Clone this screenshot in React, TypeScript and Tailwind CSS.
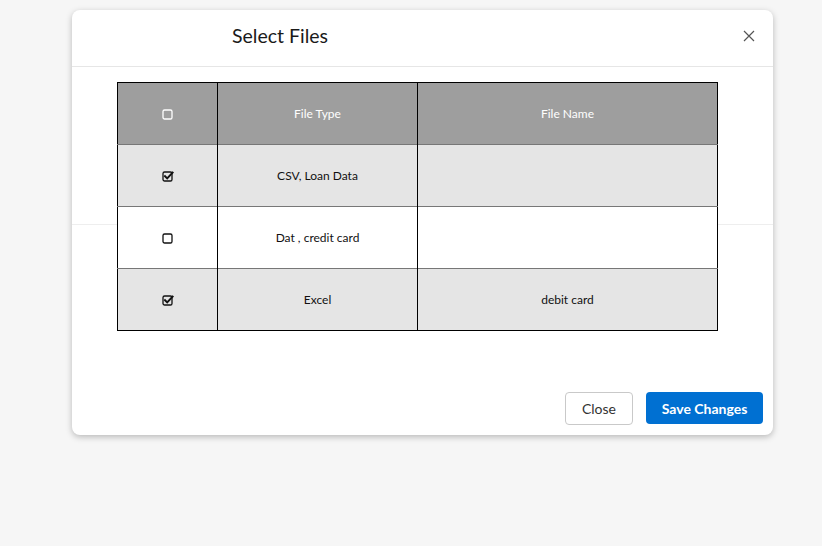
import React from 'react';

const rows = [
  { checked: true, type: 'CSV, Loan Data', name: '', shaded: true },
  { checked: false, type: 'Dat , credit card', name: '', shaded: false },
  { checked: true, type: 'Excel', name: 'debit card', shaded: true },
];

function BoxIcon({ checked, color = '#111' }: { checked: boolean; color?: string }) {
  return (
    <svg width="12" height="12" viewBox="0 0 12 12" fill="none">
      <rect x="1" y="2" width="9" height="9" rx="1.6" stroke={color} strokeWidth="1.3" />
      {checked && (
        <path d="M3 6.2 L5.2 8.4 L10.6 2.6" stroke={color} strokeWidth="2" strokeLinecap="square" />
      )}
    </svg>
  );
}

export default function App() {
  return (
    <div
      className="min-h-[546px] w-full bg-[#f6f6f6] pt-[10px]"
      style={{ fontFamily: 'Lato, "Open Sans", sans-serif' }}
    >
      <div className="ml-[72px] w-[701px] rounded-lg bg-white shadow-[0_2px_6px_rgba(0,0,0,0.25)]">
        {/* Header */}
        <div className="flex h-[57px] items-start justify-between border-b border-[#e6e6e6] pt-[12px] pl-[160px] pr-[18px]">
          <h2 className="text-[19.5px] leading-[28px] text-[#1a1a1a]">Select Files</h2>
          <svg width="12" height="12" viewBox="0 0 12 12" className="mt-[8px]">
            <path d="M1 1 L11 11 M11 1 L1 11" stroke="#555" strokeWidth="1.2" />
          </svg>
        </div>

        {/* Body */}
        <div className="h-[158px] border-b border-[#eeeeee] pt-[15px] pl-[45px]">
          <table className="relative w-[601px] border-collapse border border-black text-[12px]">
            <thead>
              <tr className="h-[62px] bg-[#9e9e9e] text-white">
                <th className="w-[100px] border-r border-black font-normal">
                  <div className="flex justify-center"><BoxIcon checked={false} color="#fff" /></div>
                </th>
                <th className="w-[200px] border-r border-black font-normal">File Type</th>
                <th className="font-normal">File Name</th>
              </tr>
            </thead>
            <tbody>
              {rows.map((r, i) => (
                <tr
                  key={i}
                  className={`h-[62px] border-t border-[#777] text-[#111] ${r.shaded ? 'bg-[#e5e5e5]' : 'bg-white'}`}
                >
                  <td className="border-r border-black">
                    <div className="flex justify-center"><BoxIcon checked={r.checked} /></div>
                  </td>
                  <td className="border-r border-black text-center">{r.type}</td>
                  <td className="text-center">{r.name}</td>
                </tr>
              ))}
            </tbody>
          </table>
        </div>

        {/* Footer */}
        <div className="flex justify-end gap-[13px] pt-[167px] pr-[10px] pb-[10px]">
          <button className="h-[33px] w-[68px] rounded border border-[#c9c9c9] bg-white text-[14px] text-[#333]">
            Close
          </button>
          <button className="h-[32px] w-[117px] rounded bg-[#0070d2] text-[14px] font-bold text-white">
            Save Changes
          </button>
        </div>
      </div>
    </div>
  );
}
